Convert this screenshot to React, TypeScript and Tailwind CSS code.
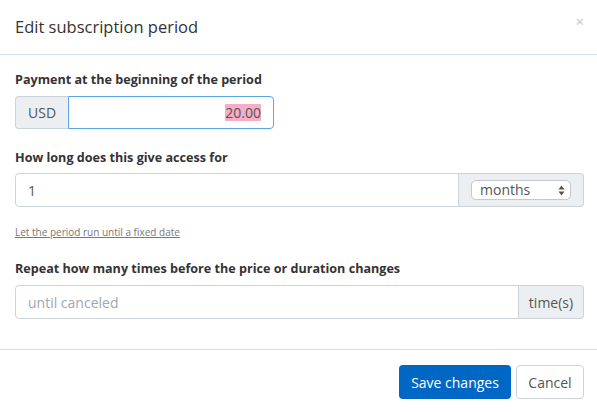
export default function App() {
  const font = { fontFamily: '"Open Sans", "Liberation Sans", sans-serif' };

  return (
    <div className="h-[412px] w-[597px] bg-white text-[#333]" style={font}>
      <div className="relative flex h-[55px] items-center border-b border-[#d5dce2] px-[15px]">
        <h1 className="text-[16.5px] leading-none text-[#333]">Edit subscription period</h1>
        <button className="absolute right-[13px] top-[14px] text-[15px] leading-none text-[#c4c4c4]">
          ×
        </button>
      </div>

      <div className="pl-[15px] pr-[13px] pt-[15px]">
        <label className="block text-[12.6px] font-bold leading-[20px]">
          Payment at the beginning of the period
        </label>
        <div className="mt-[6px] flex h-[33px] w-[259px]">
          <span className="flex items-center rounded-l-[4px] border border-r-0 border-[#ccd3d9] bg-[#ebeff2] px-[12px] text-[14px] text-[#555]">
            USD
          </span>
          <div className="flex flex-1 items-center justify-end rounded-r-[4px] border border-[#5aa6e8] px-[12px]">
            <span className="bg-[#f5adc8] text-[14px] leading-[17px] text-[#555]">20.00</span>
          </div>
        </div>

        <label className="mt-[19px] block text-[12.6px] font-bold leading-[20px]">
          How long does this give access for
        </label>
        <div className="mt-[5px] flex h-[34px]">
          <div className="flex flex-1 items-center rounded-l-[4px] border border-[#ccd3d9] px-[12px] text-[14px] text-[#555]">
            1
          </div>
          <div className="flex w-[125px] items-center justify-center rounded-r-[4px] border border-l-0 border-[#ccd3d9] bg-[#ebeff2]">
            <div className="flex h-[20px] w-[100px] items-center justify-between rounded-[5px] border border-[#c3c9ce] bg-white pl-[8px] pr-[5px] text-[14px] text-[#555]">
              <span className="leading-none">months</span>
              <svg width="7" height="11" viewBox="0 0 7 11">
                <path d="M3.5 0.5 L6.5 4.5 H0.5 Z" fill="#555" />
                <path d="M3.5 10.5 L6.5 6.5 H0.5 Z" fill="#555" />
              </svg>
            </div>
          </div>
        </div>

        <a className="mt-[18px] block text-[10px] leading-[14px] text-[#777] underline">
          Let the period run until a fixed date
        </a>

        <label className="mt-[20px] block text-[12.6px] font-bold leading-[20px]">
          Repeat how many times before the price or duration changes
        </label>
        <div className="mt-[6px] flex h-[34px]">
          <div className="flex flex-1 items-center rounded-l-[4px] border border-[#ccd3d9] px-[12px] text-[14px] text-[#a0a7ad]">
            until canceled
          </div>
          <span className="flex w-[65px] items-center justify-center rounded-r-[4px] border border-l-0 border-[#ccd3d9] bg-[#ebeff2] text-[14px] text-[#555]">
            time(s)
          </span>
        </div>
      </div>

      <div className="mt-[30px] flex justify-end gap-[5px] border-t border-[#d5dce2] pl-[15px] pr-[13px] pt-[15px]">
        <button className="h-[34px] w-[112px] rounded-[4px] bg-[#0068c4] text-[14px] text-white">
          Save changes
        </button>
        <button className="h-[34px] w-[68px] rounded-[4px] border border-[#ccd3d9] bg-white text-[14px] text-[#555]">
          Cancel
        </button>
      </div>
    </div>
  );
}
